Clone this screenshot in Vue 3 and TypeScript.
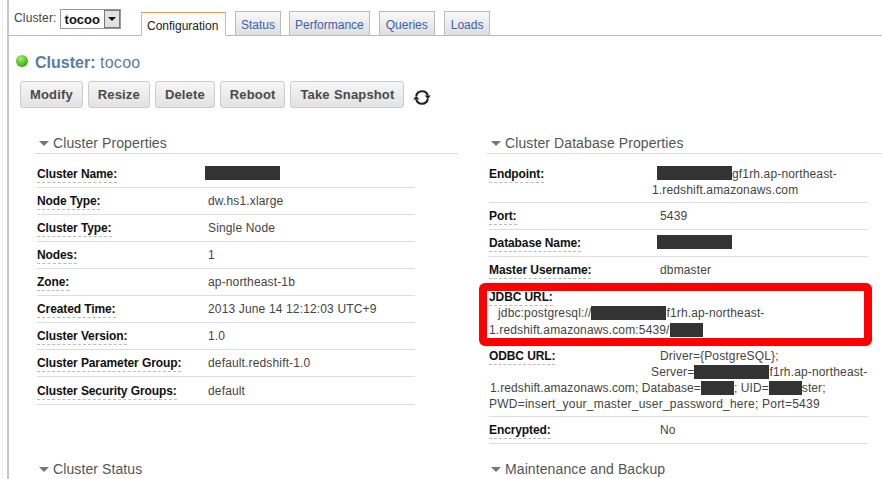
<script setup lang="ts">
interface Row { label: string; value?: string; redact?: number }
const leftRows: Row[] = [
  { label: 'Cluster Name:', redact: 75 },
  { label: 'Node Type:', value: 'dw.hs1.xlarge' },
  { label: 'Cluster Type:', value: 'Single Node' },
  { label: 'Nodes:', value: '1' },
  { label: 'Zone:', value: 'ap-northeast-1b' },
  { label: 'Created Time:', value: '2013 June 14 12:12:03 UTC+9' },
  { label: 'Cluster Version:', value: '1.0' },
  { label: 'Cluster Parameter Group:', value: 'default.redshift-1.0' },
  { label: 'Cluster Security Groups:', value: 'default' },
]
const tabs = ['Status', 'Performance', 'Queries', 'Loads']
const actions = ['Modify', 'Resize', 'Delete', 'Reboot', 'Take Snapshot']
</script>

<template>
  <div class="shell">
    <div class="page">
      <div class="topbar">
        <div class="picker">
          <span class="picker-label">Cluster:</span>
          <div class="select"><span>tocoo</span><i class="select-btn"><b></b></i></div>
        </div>
        <div class="tab active">Configuration</div>
        <div v-for="t in tabs" :key="t" class="tab">{{ t }}</div>
      </div>
      <div class="title">
        <span class="dot"></span>
        <strong>Cluster:</strong>&nbsp;<span class="title-name">tocoo</span>
      </div>
      <div class="actions">
        <button v-for="a in actions" :key="a" class="btn">{{ a }}</button>
        <svg class="refresh" width="18" height="15" viewBox="0 0 18 15">
          <path d="M3.2 6A6 6 0 0 1 14.8 5.5" fill="none" stroke="#222" stroke-width="2.2"/>
          <path d="M11.8 5.5h6l-3 3.8z" fill="#222"/>
          <path d="M14.8 9A6 6 0 0 1 3.2 9.5" fill="none" stroke="#222" stroke-width="2.2"/>
          <path d="M.2 9.5h6l-3-3.8z" fill="#222"/>
        </svg>
      </div>
      <div class="columns">
        <section class="col col-left">
          <h3 class="head"><i class="caret"></i>Cluster Properties</h3>
          <div class="rows">
            <div v-for="r in leftRows" :key="r.label" class="row">
              <span class="label"><span>{{ r.label }}</span></span>
              <span class="value">
                <i v-if="r.redact" class="redact lead" :style="{ width: r.redact + 'px' }"></i>
                <template v-else>{{ r.value }}</template>
              </span>
            </div>
          </div>
          <h3 class="head status-head"><i class="caret"></i>Cluster Status</h3>
        </section>
        <section class="col col-right">
          <h3 class="head"><i class="caret"></i>Cluster Database Properties</h3>
          <div class="rows">
            <div class="row wrap">
              <span class="label"><span>Endpoint:</span></span>
              <span class="value"><i class="redact lead" style="width: 75px"></i>gf1rh.ap-northeast-</span>
              <div class="cont ind-163">1.redshift.amazonaws.com</div>
            </div>
            <div class="row"><span class="label"><span>Port:</span></span><span class="value">5439</span></div>
            <div class="row"><span class="label"><span>Database Name:</span></span><span class="value"><i class="redact lead" style="width: 75px"></i></span></div>
            <div class="row"><span class="label"><span>Master Username:</span></span><span class="value">dbmaster</span></div>
            <div class="row jdbc">
              <span class="label"><span>JDBC URL:</span></span>
              <div class="cont ind-9">jdbc:postgresql://<i class="redact" style="width: 75px"></i>f1rh.ap-northeast-</div>
              <div class="cont nudge">1.redshift.amazonaws.com:5439/<i class="redact" style="width: 33px"></i></div>
              <div class="annotation"></div>
            </div>
            <div class="row odbc">
              <span class="label"><span>ODBC URL:</span></span>
              <span class="value">Driver={PostgreSQL};</span>
              <div class="cont ind-162">Server=<i class="redact" style="width: 75px"></i>f1rh.ap-northeast-</div>
              <div class="cont tight">1.redshift.amazonaws.com; Database=<i class="redact" style="width: 33px"></i>; UID=<i class="redact" style="width: 33px"></i>ster;</div>
              <div class="cont loose">PWD=insert_your_master_user_password_here; Port=5439</div>
            </div>
            <div class="row"><span class="label"><span>Encrypted:</span></span><span class="value">No</span></div>
          </div>
          <h3 class="head maint-head"><i class="caret"></i>Maintenance and Backup</h3>
        </section>
      </div>
    </div>
  </div>
</template>

<style>
html, body { margin: 0; background: #fff; overflow: hidden; }
</style>

<style scoped>
.shell {
  margin-left: 2px;
  padding-left: 4px;
  border-left: 1px solid #ececec;
  height: 479px;
  box-sizing: border-box;
}
.page {
  width: 875px;
  height: 479px;
  border-left: 2px solid #c6c6c6;
  font-family: "Liberation Sans", Arial, sans-serif;
  color: #444;
  font-size: 12px;
  overflow: hidden;
  box-sizing: border-box;
}
.topbar {
  display: flex;
  align-items: flex-end;
  height: 36px;
  box-sizing: border-box;
  border-bottom: 1px solid #bbb;
  padding-left: 5px;
  gap: 9px;
}
.picker { display: flex; align-items: flex-start; width: 118px; height: 26px; flex: none; }
.picker-label { font-size: 12px; color: #444; margin-right: 3px; line-height: 19px; letter-spacing: 0.15px; }
.select {
  display: flex; align-items: center; justify-content: space-between;
  width: 61px; height: 20px; box-sizing: border-box;
  border: 1px solid #999; padding-left: 4px;
  font-size: 13px; font-weight: bold; color: #111; background: #fff;
}
.select-btn {
  width: 16px; height: 18px; box-sizing: border-box; background: #e2e2e2;
  border: 1px solid #777; display: flex; align-items: center; justify-content: center;
}
.select-btn b { width: 0; height: 0; border: 4px solid transparent; border-top: 4px solid #111; border-bottom: 0; }
.tab {
  height: 25px; box-sizing: border-box; padding: 0 5px; margin-bottom: -1px; flex: none;
  border: 1px solid #bbb;
  background: linear-gradient(#f9f9f9, #dedede);
  color: #3a60b0; font-size: 12px; line-height: 26px;
}
.tab:nth-child(3) { margin-right: -1px; }
.tab:nth-child(5), .tab:nth-child(6) { padding: 0 6px; }
.tab.active {
  height: 24px; width: 85px; border-top-color: #f90; border-bottom-color: #fff;
  background: #fff; color: #222; line-height: 27px;
}
.title {
  display: flex; align-items: center; height: 20px; margin-top: 17px; padding-left: 7px;
  font-size: 16px; color: #5a7ca8;
}
.title strong { font-weight: bold; }
.title-name { letter-spacing: 0.3px; }
.dot {
  width: 12px; height: 12px; border-radius: 50%; margin-right: 7px; margin-top: -5px;
  background: radial-gradient(circle at 40% 30%, #a5f070, #4cb81e 60%, #2f8f10);
}
.actions { display: flex; align-items: center; gap: 5px; margin-top: 8px; padding-left: 11px; height: 27px; }
.btn {
  height: 27px; padding: 0 9px; border: 1px solid #ccc; border-radius: 3px;
  background: linear-gradient(#f6f6f6, #e2e2e2); font: bold 13px "Liberation Sans", Arial, sans-serif;
  color: #4a4a4a; letter-spacing: 0.15px; word-spacing: 0.5px; box-sizing: border-box; flex: none;
}
.refresh { margin: 6px 0 0 4px; flex: none; }
.columns { display: grid; grid-template-columns: 450px 424px; margin-top: 25px; }
.col { box-sizing: border-box; min-width: 0; }
.col-left { padding-left: 26px; }
.col-right { padding-left: 28px; }
.head {
  margin: 0; font-size: 14px; font-weight: normal; color: #555; height: 21px; line-height: 19px;
  letter-spacing: 0.1px; box-sizing: border-box;
  border-bottom: 1px solid #ddd; padding-left: 4px; display: flex; align-items: center;
}
.col-left .head { width: 423px; }
.caret {
  width: 0; height: 0; border: 5px solid transparent; border-top: 5px solid #777; border-bottom: 0; margin-right: 4px; flex: none;
}
.rows { margin-left: 2px; }
.col-left .rows { width: 378px; }
.col-right .rows { width: 379px; }
.row {
  position: relative;
  box-sizing: border-box; border-bottom: 1px solid #ddd;
  min-height: 27px; display: flex; align-items: flex-start; padding-top: 5px; line-height: 16px;
}
.rows .row:first-child { min-height: 34px; padding-top: 12px; }
.col-left .rows .row:last-child { min-height: 28px; padding-top: 6px; }
.row.wrap, .row.odbc, .row.jdbc { display: block; }
.row.wrap { height: 49px; }
.label { display: inline-block; width: 171px; flex: none; font-weight: bold; color: #111; letter-spacing: -0.1px; }
.label span { border-bottom: 1px dashed #bbb; padding-bottom: 1px; }
.value { color: #444; letter-spacing: 0.15px; }
.cont { line-height: 16px; white-space: nowrap; letter-spacing: 0.15px; color: #444; }
.ind-163 { padding-left: 163px; }
.ind-162 { padding-left: 162px; }
.ind-9 { padding-left: 9px; }
.nudge { margin-top: 1px; }
.tight { letter-spacing: 0.09px; padding-left: 1px; }
.loose { letter-spacing: 0.23px; }
.redact { display: inline-block; height: 14px; background: #333; vertical-align: -2px; }
.cont .redact { vertical-align: -3px; }
.redact.lead { margin-left: -3px; }
.annotation {
  position: absolute; left: -10px; top: -1px; width: 393px; height: 63px; box-sizing: border-box;
  border: 8px solid #f00; border-radius: 6px; pointer-events: none;
}
.jdbc { border-bottom: 0; height: 58px; }
.odbc { padding-top: 6px; height: 75px; }
.status-head { margin-top: 54px; border: 0; }
.maint-head { margin-top: 15px; border: 0; }
</style>
